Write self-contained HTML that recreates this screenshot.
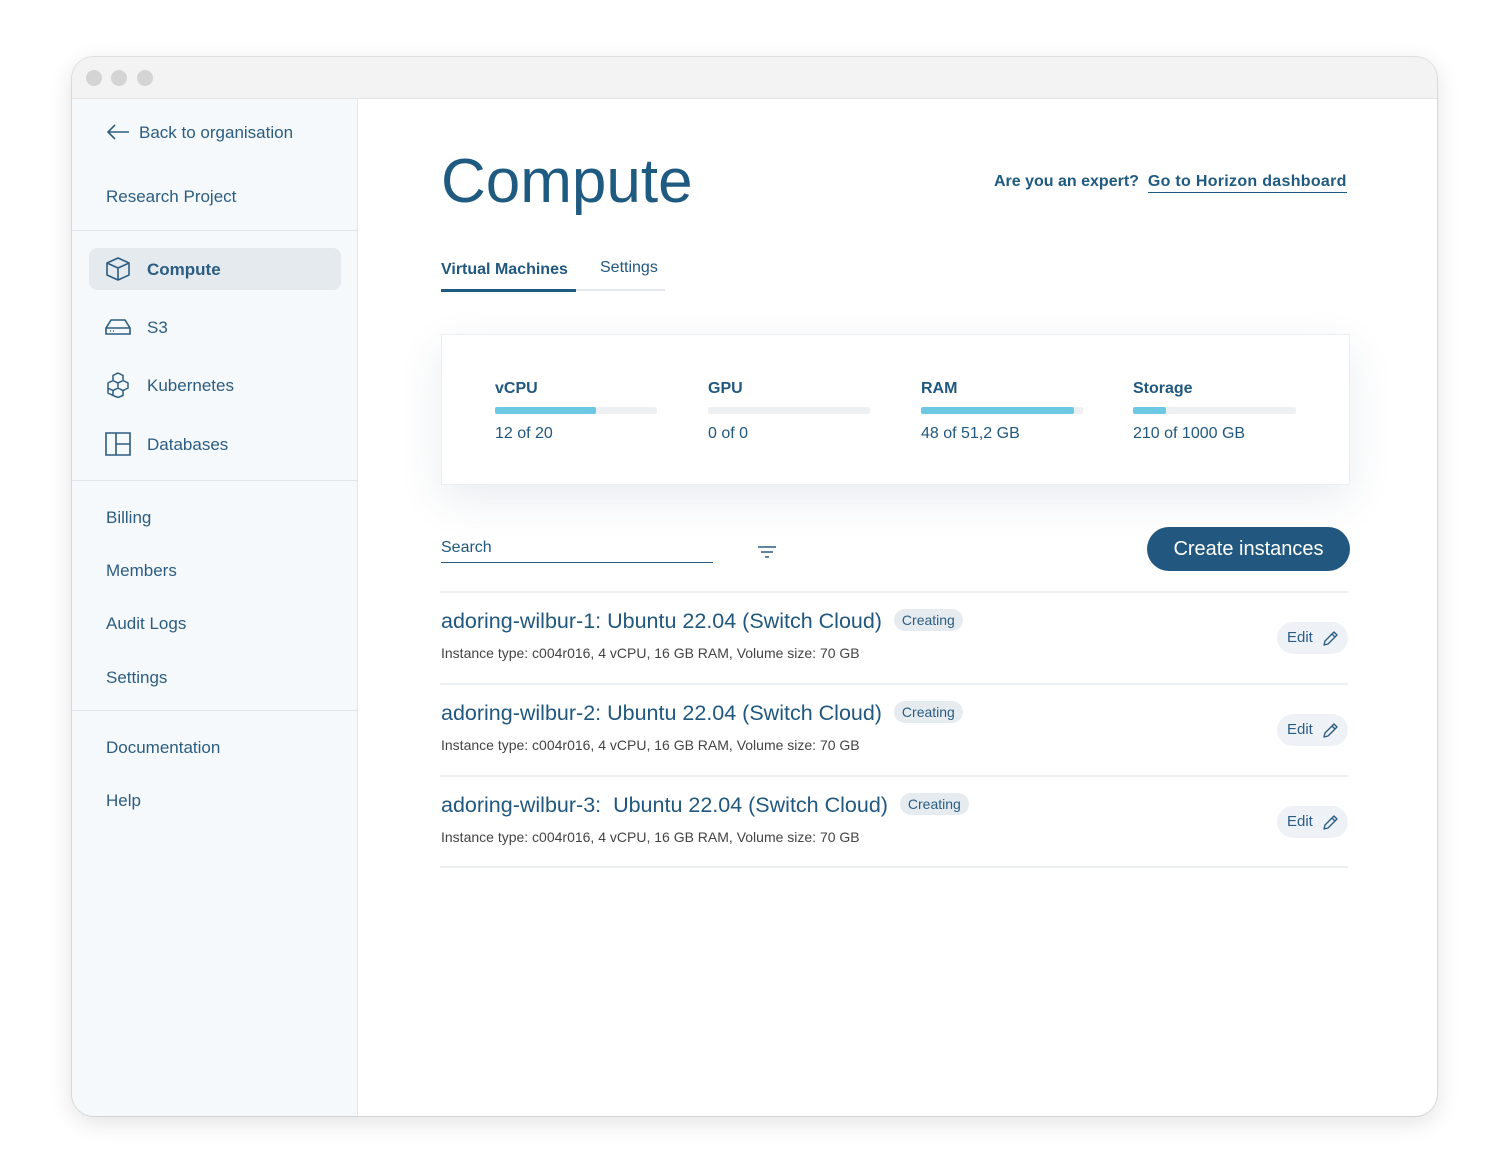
<!DOCTYPE html>
<html><head><style>
*{box-sizing:border-box;margin:0;padding:0}
body{width:1508px;height:1173px;background:#fff;font-family:"Liberation Sans",sans-serif;color:#21587f;position:relative;overflow:hidden}
.win{position:absolute;left:72px;top:57px;width:1365px;height:1059px;border-radius:22px;background:#fff;box-shadow:0 6px 24px rgba(0,0,0,.12),0 0 0 1px #e6e6e6;overflow:hidden}
.tb{height:42px;background:#f3f3f3;border-bottom:1px solid #e4e4e4;position:relative}
.dot{position:absolute;top:13px;width:16px;height:16px;border-radius:50%;background:#d4d4d4}
.side{position:absolute;left:0;top:42px;width:286px;bottom:0;background:#f6f9fc;border-right:1px solid #e3e8ee}
.t{position:absolute;white-space:nowrap;margin-top:1px}
.hr{position:absolute;left:0;width:285px;height:1px;background:#dfe5eb}
.s{font-size:17px;color:#2b5d82}
.ic{position:absolute}
.sel{position:absolute;left:17px;top:149px;width:252px;height:42px;background:#e5eaef;border-radius:8px}
.bar{position:absolute;height:7px;background:#eef1f4;border-radius:2px}
.bar i{display:block;height:7px;background:#6dc8e3;border-radius:2px}
.pill{display:inline-block;background:#e6ebf0;border-radius:12px;font-size:14px;padding:3px 8px;color:#2b5d82;vertical-align:3px}
.edit{position:absolute;left:1277px;width:71px;height:32px;background:#eef2f6;border-radius:16px;font-size:15px;color:#2b5d82;padding:7px 0 0 10px}
.edit svg{position:absolute;left:45px;top:8px}
.sep{position:absolute;left:440px;width:908px;height:2px;background:#edf0f3}
.rt{font-size:21.5px}
</style></head><body>
<div class="win">
<div class="tb"><div class="dot" style="left:14px"></div><div class="dot" style="left:39px"></div><div class="dot" style="left:65px"></div></div>
<div class="side">
<svg class="ic" style="left:34px;top:25px" width="24" height="16" viewBox="0 0 24 16"><path d="M23 8H2M9 1L2 8l7 7" fill="none" stroke="#2b5d82" stroke-width="1.6"/></svg>
<div class="t s" style="left:67px;top:23px">Back to organisation</div>
<div class="t s" style="left:34px;top:87px">Research Project</div>
<div class="hr" style="top:131px"></div>
<div class="sel"></div>
<svg class="ic" style="left:33px;top:157px" width="26" height="26" viewBox="0 0 26 26"><path d="M13 2L24 7v12l-11 5L2 19V7zM2 7l11 5 11-5M13 12v12" fill="none" stroke="#2b5d82" stroke-width="1.6" stroke-linejoin="round"/></svg>
<div class="t s" style="left:75px;top:160px;font-weight:bold">Compute</div>
<svg class="ic" style="left:33px;top:219px" width="26" height="18" viewBox="0 0 26 18"><path d="M6 2h14l5 8v6H1v-6zM1 10h24M5 13h1M8 13h1" fill="none" stroke="#2b5d82" stroke-width="1.6"/></svg>
<div class="t s" style="left:75px;top:218px">S3</div>
<svg class="ic" style="left:33px;top:273px" width="26" height="26" viewBox="0 0 26 26"><path d="M13 1l5 2.5v5L13 11 8 8.5v-5zM8 8.5l5 2.5v5l-5 2.5-5-2.5v-5zM18 8.5l5 2.5v5l-5 2.5-5-2.5M8 18.5v5l5 2 5-2v-5M3 16v5l5 2.5" fill="none" stroke="#2b5d82" stroke-width="1.5"/></svg>
<div class="t s" style="left:75px;top:276px">Kubernetes</div>
<svg class="ic" style="left:33px;top:333px" width="26" height="24" viewBox="0 0 26 24"><path d="M1 1h24v22H1zM11 1v22M11 12h14" fill="none" stroke="#2b5d82" stroke-width="1.6"/></svg>
<div class="t s" style="left:75px;top:335px">Databases</div>
<div class="hr" style="top:381px"></div>
<div class="t s" style="left:34px;top:408px">Billing</div>
<div class="t s" style="left:34px;top:461px">Members</div>
<div class="t s" style="left:34px;top:514px">Audit Logs</div>
<div class="t s" style="left:34px;top:568px">Settings</div>
<div class="hr" style="top:611px"></div>
<div class="t s" style="left:34px;top:638px">Documentation</div>
<div class="t s" style="left:34px;top:691px">Help</div>
</div>
</div>
<div class="t" style="left:441px;top:145px;font-size:62px;color:#1f5a80">Compute</div>
<div class="t" style="left:994px;top:172px;font-size:16px;font-weight:bold;color:#1f5a80">Are you an expert?&nbsp; <span style="border-bottom:1.5px solid #1f5a80;padding-bottom:2px;letter-spacing:.3px">Go to Horizon dashboard</span></div>
<div class="t" style="left:441px;top:260px;font-size:16px;font-weight:bold">Virtual Machines</div>
<div class="t" style="left:600px;top:258px;font-size:16px">Settings</div>
<div style="position:absolute;left:441px;top:289px;width:224px;height:2px;background:#e3e7ec"></div>
<div style="position:absolute;left:441px;top:289px;width:135px;height:3px;background:#1f5a80"></div>
<div style="position:absolute;left:441px;top:334px;width:909px;height:151px;background:#fff;border:1px solid #eceff2;box-shadow:0 14px 40px rgba(40,70,110,.1)"></div>
<div class="t" style="left:495px;top:379px;font-size:16px;font-weight:bold">vCPU</div>
<div class="bar" style="left:495px;top:407px;width:162px"><i style="width:101px"></i></div>
<div class="t" style="left:495px;top:424px;font-size:16px">12 of 20</div>
<div class="t" style="left:708px;top:379px;font-size:16px;font-weight:bold">GPU</div>
<div class="bar" style="left:708px;top:407px;width:162px"></div>
<div class="t" style="left:708px;top:424px;font-size:16px">0 of 0</div>
<div class="t" style="left:921px;top:379px;font-size:16px;font-weight:bold">RAM</div>
<div class="bar" style="left:921px;top:407px;width:162px"><i style="width:153px"></i></div>
<div class="t" style="left:921px;top:424px;font-size:16px">48 of 51,2 GB</div>
<div class="t" style="left:1133px;top:379px;font-size:16px;font-weight:bold">Storage</div>
<div class="bar" style="left:1133px;top:407px;width:163px"><i style="width:33px"></i></div>
<div class="t" style="left:1133px;top:424px;font-size:16px">210 of 1000 GB</div>
<div class="t" style="left:441px;top:538px;font-size:16px">Search</div>
<div style="position:absolute;left:441px;top:562px;width:272px;height:1px;background:#2b5d82"></div>
<svg style="position:absolute;left:757px;top:545px" width="20" height="14"><path d="M1 2h18M4 7h12M8 12h4" stroke="#2b5d82" stroke-width="1.6"/></svg>
<div style="position:absolute;left:1147px;top:527px;width:203px;height:44px;background:#22587f;border-radius:22px;color:#fff;font-size:20px;text-align:center;line-height:44px">Create instances</div>
<div class="sep" style="top:591px"></div>
<div class="t rt" style="left:441px;top:608px">adoring-wilbur-1: Ubuntu 22.04 (Switch Cloud) &nbsp;<span class="pill">Creating</span></div>
<div class="t" style="left:441px;top:644px;font-size:14px;color:#444">Instance type: c004r016, 4 vCPU, 16 GB RAM, Volume size: 70 GB</div>
<div class="edit" style="top:622px">Edit<svg width="17" height="17" viewBox="0 0 17 17"><path d="M2 15l1-4L12 2l3 3-9 9zM10 4l3 3" fill="none" stroke="#2b5d82" stroke-width="1.4" stroke-linejoin="round"/></svg></div>
<div class="sep" style="top:683px"></div>
<div class="t rt" style="left:441px;top:700px">adoring-wilbur-2: Ubuntu 22.04 (Switch Cloud) &nbsp;<span class="pill">Creating</span></div>
<div class="t" style="left:441px;top:736px;font-size:14px;color:#444">Instance type: c004r016, 4 vCPU, 16 GB RAM, Volume size: 70 GB</div>
<div class="edit" style="top:714px">Edit<svg width="17" height="17" viewBox="0 0 17 17"><path d="M2 15l1-4L12 2l3 3-9 9zM10 4l3 3" fill="none" stroke="#2b5d82" stroke-width="1.4" stroke-linejoin="round"/></svg></div>
<div class="sep" style="top:775px"></div>
<div class="t rt" style="left:441px;top:792px">adoring-wilbur-3:&nbsp; Ubuntu 22.04 (Switch Cloud) &nbsp;<span class="pill">Creating</span></div>
<div class="t" style="left:441px;top:828px;font-size:14px;color:#444">Instance type: c004r016, 4 vCPU, 16 GB RAM, Volume size: 70 GB</div>
<div class="edit" style="top:806px">Edit<svg width="17" height="17" viewBox="0 0 17 17"><path d="M2 15l1-4L12 2l3 3-9 9zM10 4l3 3" fill="none" stroke="#2b5d82" stroke-width="1.4" stroke-linejoin="round"/></svg></div>
<div class="sep" style="top:866px"></div>
</body></html>
